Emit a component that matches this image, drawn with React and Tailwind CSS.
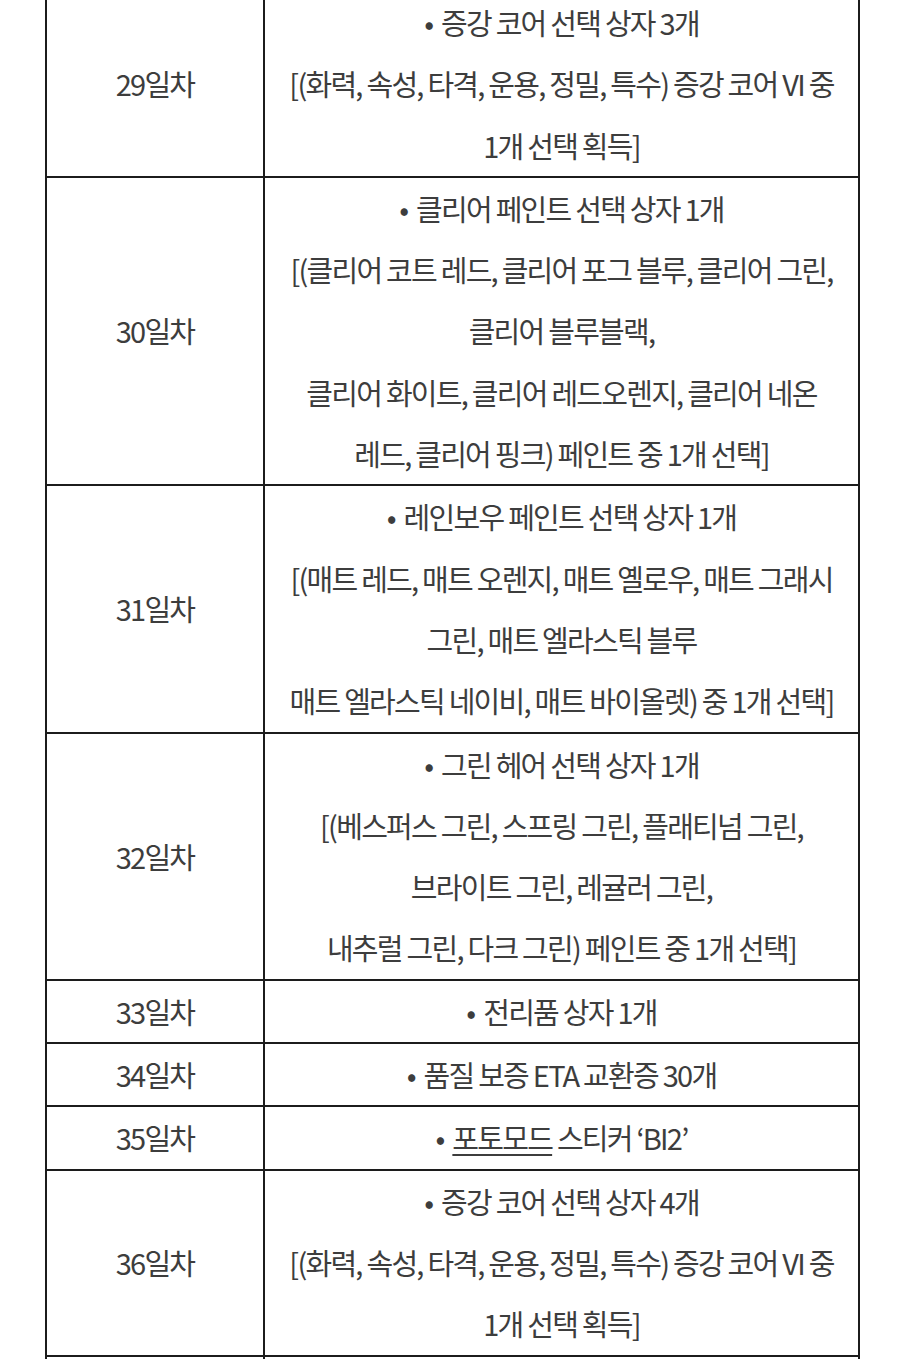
const rows = [
    {
        day: "29일차",
        lines: [
            "• 증강 코어 선택 상자 3개",
            "[(화력, 속성, 타격, 운용, 정밀, 특수) 증강 코어 VI 중",
            "1개 선택 획득]",
        ],
    },
    {
        day: "30일차",
        lines: [
            "• 클리어 페인트 선택 상자 1개",
            "[(클리어 코트 레드, 클리어 포그 블루, 클리어 그린,",
            "클리어 블루블랙,",
            "클리어 화이트, 클리어 레드오렌지, 클리어 네온",
            "레드, 클리어 핑크) 페인트 중 1개 선택]",
        ],
    },
    {
        day: "31일차",
        lines: [
            "• 레인보우 페인트 선택 상자 1개",
            "[(매트 레드, 매트 오렌지, 매트 옐로우, 매트 그래시",
            "그린, 매트 엘라스틱 블루",
            "매트 엘라스틱 네이비, 매트 바이올렛) 중 1개 선택]",
        ],
    },
    {
        day: "32일차",
        lines: [
            "• 그린 헤어 선택 상자 1개",
            "[(베스퍼스 그린, 스프링 그린, 플래티넘 그린,",
            "브라이트 그린, 레귤러 그린,",
            "내추럴 그린, 다크 그린) 페인트 중 1개 선택]",
        ],
    },
    { day: "33일차", lines: ["• 전리품 상자 1개"] },
    { day: "34일차", lines: ["• 품질 보증 ETA 교환증 30개"] },
    { day: "35일차", link: true, lines: [] },
    {
        day: "36일차",
        lines: [
            "• 증강 코어 선택 상자 4개",
            "[(화력, 속성, 타격, 운용, 정밀, 특수) 증강 코어 VI 중",
            "1개 선택 획득]",
        ],
    },
];

const cell = "border-2 border-[#1c1c1c] text-center align-middle p-0";

// bullet lines get a little more room after the dot
const Line = ({ text }) => {
    if (text.startsWith("• ")) {
        return (
            <div>
                <span className="mr-[4px]">•</span> {text.slice(2)}
            </div>
        );
    }
    return <div>{text}</div>;
};

const App = () => {
    return (
        <div className="min-h-screen bg-white overflow-hidden">
            <table className="ml-[45px] -mt-[10px] w-[815px] border-collapse font-['Noto_Sans_CJK_KR','Noto_Sans',sans-serif] text-[29px] leading-[61.3px] tracking-[-0.06em] text-[#3d3d3d]">
                <colgroup>
                    <col className="w-[218px]" />
                    <col />
                </colgroup>
                <tbody>
                    {rows.map((row) => (
                        <tr key={row.day}>
                            <td className={cell}>{row.day}</td>
                            <td className={cell + " whitespace-nowrap"}>
                                {row.link ? (
                                    <div>
                                        <span className="mr-[4px]">•</span>{" "}
                                        <span className="underline underline-offset-4">포토모드</span> 스티커 ‘BI2’
                                    </div>
                                ) : (
                                    row.lines.map((line, i) => <Line key={i} text={line} />)
                                )}
                            </td>
                        </tr>
                    ))}
                    <tr>
                        <td className={cell + " h-[40px]"}></td>
                        <td className={cell}></td>
                    </tr>
                </tbody>
            </table>
        </div>
    );
};

export default App;
